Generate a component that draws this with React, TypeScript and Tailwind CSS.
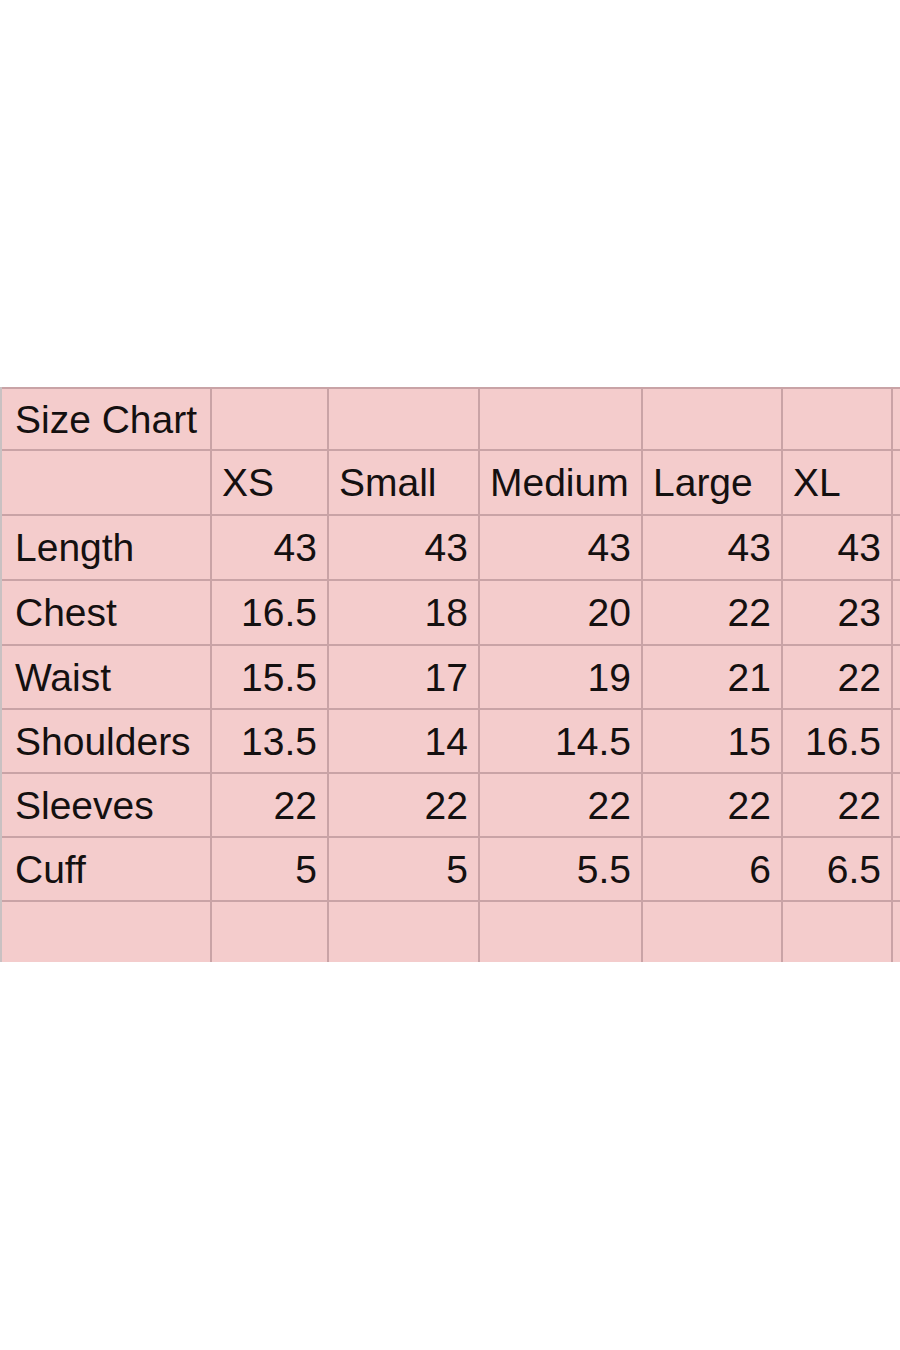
import React from 'react';

const sizes = ['XS', 'Small', 'Medium', 'Large', 'XL'];

const rows: { label: string; values: string[]; h: string }[] = [
  { label: 'Length', values: ['43', '43', '43', '43', '43'], h: 'h-[63px]' },
  { label: 'Chest', values: ['16.5', '18', '20', '22', '23'], h: 'h-[63px]' },
  { label: 'Waist', values: ['15.5', '17', '19', '21', '22'], h: 'h-[62px]' },
  { label: 'Shoulders', values: ['13.5', '14', '14.5', '15', '16.5'], h: 'h-[62px]' },
  { label: 'Sleeves', values: ['22', '22', '22', '22', '22'], h: 'h-[62px]' },
  { label: 'Cuff', values: ['5', '5', '5.5', '6', '6.5'], h: 'h-[62px]' },
];

const cell = 'bg-[#f4cccc] flex items-center';

export default function App() {
  return (
    <div className="w-[900px] h-[1350px] bg-white overflow-hidden">
      <div className="pt-[387px]">
        <div
          className="grid w-[1000px] grid-cols-[208px_115px_149px_161px_138px_108px_100px] gap-[2px] bg-[#c9a3a6] pt-[2px] border-l-[2px] border-[#c9c1c2] text-[#141010] text-[39px] leading-none"
          style={{ fontFamily: '"Liberation Sans", Arial, sans-serif' }}
        >
          {/* title row */}
          <div className={`${cell} h-[60px] pl-[13px]`}>Size Chart</div>
          {Array.from({ length: 6 }).map((_, i) => (
            <div key={`t${i}`} className={`${cell} h-[60px]`} />
          ))}

          {/* size headers */}
          <div className={`${cell} h-[63px]`} />
          {sizes.map((s) => (
            <div key={s} className={`${cell} h-[63px] pl-[10px]`}>
              {s}
            </div>
          ))}
          <div className={`${cell} h-[63px]`} />

          {rows.map((r) => (
            <React.Fragment key={r.label}>
              <div className={`${cell} ${r.h} pl-[13px]`}>{r.label}</div>
              {r.values.map((v, i) => (
                <div key={i} className={`${cell} ${r.h} justify-end pr-[10px]`}>
                  {v}
                </div>
              ))}
              <div className={`${cell} ${r.h}`} />
            </React.Fragment>
          ))}

          {/* empty last row */}
          {Array.from({ length: 7 }).map((_, i) => (
            <div key={`e${i}`} className={`${cell} h-[60px]`} />
          ))}
        </div>
      </div>
    </div>
  );
}
